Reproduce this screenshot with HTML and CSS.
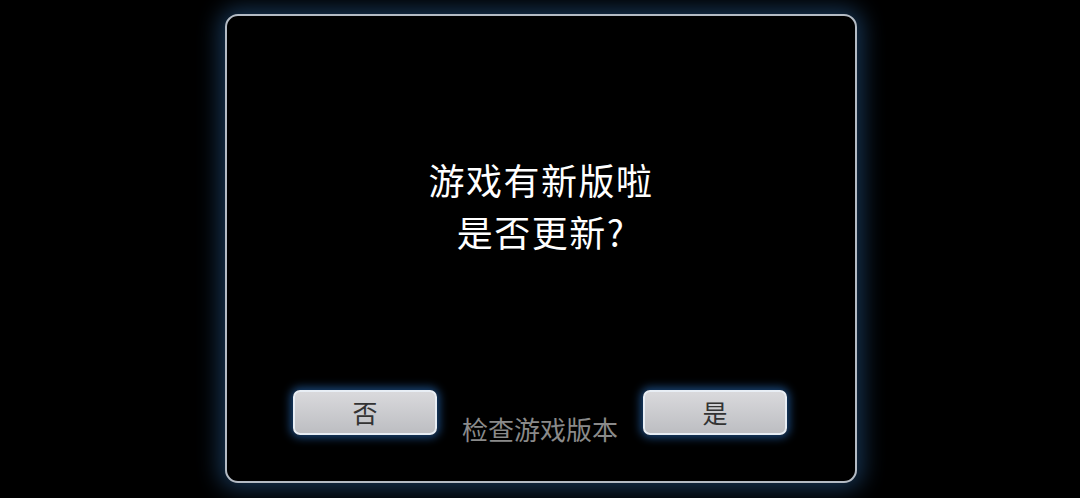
FILE: index.html
```html
<!DOCTYPE html>
<html lang="zh">
<head>
<meta charset="utf-8">
<link rel="stylesheet" href="styles.css">
</head>
<body>
<div class="panel">
  <div class="message">
    <div class="line">游戏有新版啦</div>
    <div class="line">是否更新?</div>
  </div>
  <div class="actions">
    <button class="btn">否</button>
    <div class="check">检查游戏版本</div>
    <button class="btn">是</button>
  </div>
</div>
</body>
</html>
```
FILE: styles.css
```css
html, body {
  margin: 0;
  padding: 0;
  background: #000;
  width: 1080px;
  height: 498px;
  overflow: hidden;
  font-family: "Noto Sans CJK SC", "Noto Sans", sans-serif;
}
.panel {
  box-sizing: border-box;
  margin: 14px 0 0 225px;
  width: 632px;
  height: 469px;
  border: 2px solid #b4bbc4;
  border-radius: 13px;
  background: #000;
  box-shadow: 0 0 22px 6px rgba(30, 68, 108, 0.75);
  display: flex;
  flex-direction: column;
  padding: 137px 68px 37px 66px;
}
.message {
  text-align: center;
  color: #fff;
  font-size: 36px;
  line-height: 52px;
  letter-spacing: 1.5px;
  padding-left: 2px;
}
.actions {
  margin-top: auto;
  display: flex;
  align-items: flex-start;
  height: 54px;
}
.btn {
  width: 144px;
  height: 45px;
  box-sizing: border-box;
  border: 2px solid #e8eef5;
  border-radius: 7px;
  background: linear-gradient(#d9d9dc, #bdbec2);
  box-shadow: 0 0 9px 3px rgba(40, 110, 190, 0.6);
  color: #333;
  font-family: inherit;
  font-size: 25px;
  line-height: 1;
  padding: 0;
}
.check {
  flex: 1;
  text-align: center;
  color: #8a8a8a;
  font-size: 26px;
  line-height: 26px;
  padding-top: 26px;
}
```
